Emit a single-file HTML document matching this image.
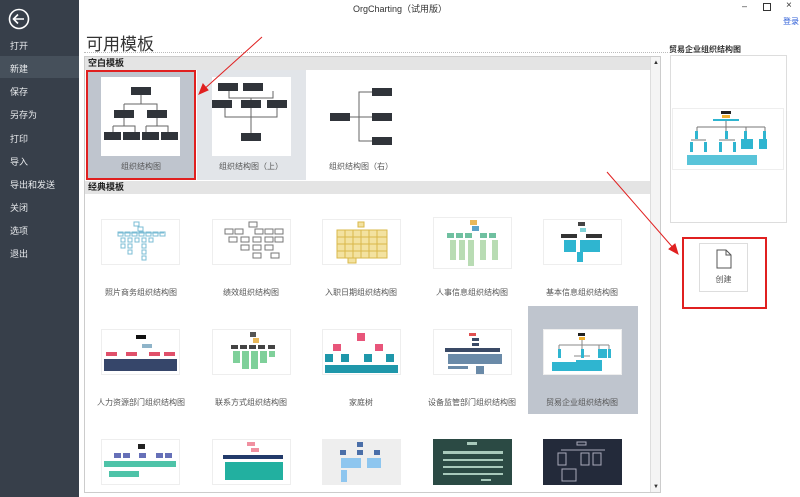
<!DOCTYPE html>
<html><head><meta charset="utf-8"><style>
*{margin:0;padding:0;box-sizing:border-box}
body{width:800px;height:497px;background:#fff;position:relative;overflow:hidden;font-family:"Liberation Sans","Noto Sans CJK SC",sans-serif;color:#333}
.a{position:absolute}
.side{left:0;top:0;width:79px;height:497px;background:#373f4a}
.mi{position:absolute;left:10px;font-size:9px;color:#e8eaed}
.sel{left:0;top:56px;width:79px;height:22px;background:#46505b}
.hd{background:#e4e4e4;font-size:9px;font-weight:bold;color:#222;padding-left:3px;line-height:13px}
.lbl{font-size:8px;color:#555;text-align:center;width:110px}
.th{background:#fff;border:1px solid #eee}
</style></head><body>
<div class="a side"></div>
<div class="a sel"></div>
<svg class="a" style="left:8px;top:8px" width="22" height="22" viewBox="0 0 22 22"><circle cx="11" cy="11" r="9.5" fill="none" stroke="#fff" stroke-width="1.6"/><path d="M16 11H6M10 6.5L5.5 11 10 15.5" fill="none" stroke="#fff" stroke-width="1.6"/></svg>
<div class="mi" style="top:39px">打开</div>
<div class="mi" style="top:62px">新建</div>
<div class="mi" style="top:85px">保存</div>
<div class="mi" style="top:108px">另存为</div>
<div class="mi" style="top:132px">打印</div>
<div class="mi" style="top:155px">导入</div>
<div class="mi" style="top:178px">导出和发送</div>
<div class="mi" style="top:201px">关闭</div>
<div class="mi" style="top:224px">选项</div>
<div class="mi" style="top:247px">退出</div>

<div class="a" style="left:0;top:0;width:800px;text-align:center;font-size:9px;top:2px;color:#333">OrgCharting（试用版）</div>
<div class="a" style="left:742px;top:1px;font-size:9px;color:#333">‒</div>
<div class="a" style="left:763px;top:3px;width:8px;height:8px;border:1px solid #333"></div>
<div class="a" style="left:786px;top:0px;font-size:10px;color:#333">×</div>
<div class="a" style="left:783px;top:16px;font-size:8px;color:#2a5bd7">登录</div>

<div class="a" style="left:86px;top:30px;font-size:17px;color:#333">可用模板</div>
<div class="a" style="left:84px;top:52px;width:584px;border-top:1px dotted #bbb"></div>
<div class="a" style="left:84px;top:56px;width:577px;height:437px;border:1px solid #ccc"></div>
<div class="a" style="left:650px;top:57px;width:10px;height:435px;background:#f4f4f4;border-left:1px solid #ddd"></div>
<div class="a" style="left:653px;top:60px;font-size:6px">▲</div>
<div class="a" style="left:653px;top:484px;font-size:6px">▼</div>
<div class="a hd" style="left:85px;top:57px;width:565px">空白模板</div>
<div class="a hd" style="left:85px;top:181px;width:565px">经典模板</div>

<div class="a" style="left:86px;top:70px;width:110px;height:110px;background:#bfc5ce;border:2px solid #e02020"></div>
<div class="a" style="left:197px;top:70px;width:109px;height:110px;background:#e2e5e9"></div>
<div class="a" style="left:101px;top:77px;width:79px;height:79px;background:#fff"></div>
<div class="a" style="left:212px;top:77px;width:79px;height:79px;background:#fff"></div>
<svg class="a" style="left:101px;top:77px" width="79" height="79" viewBox="0 0 79 79"><g fill="none" stroke="#666" stroke-width="1"><path d="M40 18V27M23 27H56V33M23 27V33M23 41V49M12 49H34V55M12 49V55M56 41V49M45 49H67V55M45 49V55"/></g><g fill="#30343a"><rect x="30" y="10" width="20" height="8"/><rect x="13" y="33" width="20" height="8"/><rect x="46" y="33" width="20" height="8"/><rect x="3" y="55" width="17" height="8"/><rect x="22" y="55" width="17" height="8"/><rect x="41" y="55" width="17" height="8"/><rect x="60" y="55" width="17" height="8"/></g></svg>
<svg class="a" style="left:212px;top:77px" width="79" height="79" viewBox="0 0 79 79"><g fill="none" stroke="#666"><path d="M17 14V21H61V14M39 21V56M13 31V40H65V31"/></g><g fill="#30343a"><rect x="6" y="6" width="20" height="8"/><rect x="31" y="6" width="20" height="8"/><rect x="0" y="23" width="20" height="8"/><rect x="29" y="23" width="20" height="8"/><rect x="55" y="23" width="20" height="8"/><rect x="29" y="56" width="20" height="8"/></g></svg>
<svg class="a" style="left:320px;top:77px" width="79" height="79" viewBox="0 0 79 79"><g fill="none" stroke="#666"><path d="M30 40H52M39 40V15H52M39 40V64H52"/></g><g fill="#30343a"><rect x="10" y="36" width="20" height="8"/><rect x="52" y="11" width="20" height="8"/><rect x="52" y="36" width="20" height="8"/><rect x="52" y="60" width="20" height="8"/></g></svg>
<div class="a lbl" style="left:86px;top:161px">组织结构图</div>
<div class="a lbl" style="left:196px;top:161px">组织结构图（上）</div>
<div class="a lbl" style="left:306px;top:161px">组织结构图（右）</div>

<div class="a" style="left:528px;top:306px;width:110px;height:108px;background:#bfc5ce"></div>

<div class="a th" style="left:101px;top:219px;width:79px;height:46px"><svg width="77" height="44"><g fill="none" stroke="#7bbcd4"><rect x="32" y="2" width="5" height="4"/><rect x="36" y="7" width="5" height="4"/><path d="M16 13H62"/><g><rect x="16" y="12" width="5" height="4"/><rect x="23" y="12" width="5" height="4"/><rect x="30" y="12" width="5" height="4"/><rect x="37" y="12" width="5" height="4"/><rect x="44" y="12" width="5" height="4"/><rect x="51" y="12" width="5" height="4"/><rect x="58" y="12" width="5" height="4"/><rect x="19" y="18" width="4" height="4"/><rect x="26" y="18" width="4" height="4"/><rect x="33" y="18" width="4" height="4"/><rect x="40" y="18" width="4" height="4"/><rect x="47" y="18" width="4" height="4"/><rect x="19" y="24" width="4" height="4"/><rect x="26" y="24" width="4" height="4"/><rect x="40" y="24" width="4" height="4"/><rect x="26" y="30" width="4" height="4"/><rect x="40" y="30" width="4" height="4"/><rect x="40" y="36" width="4" height="4"/></g></g></svg></div>
<div class="a th" style="left:212px;top:219px;width:79px;height:46px"><svg width="77" height="44"><g fill="#fff" stroke="#777"><rect x="36" y="2" width="8" height="5"/><rect x="12" y="9" width="8" height="5"/><rect x="22" y="9" width="8" height="5"/><rect x="42" y="9" width="8" height="5"/><rect x="52" y="9" width="8" height="5"/><rect x="62" y="9" width="8" height="5"/><rect x="16" y="17" width="8" height="5"/><rect x="28" y="17" width="8" height="5"/><rect x="40" y="17" width="8" height="5"/><rect x="52" y="17" width="8" height="5"/><rect x="62" y="17" width="8" height="5"/><rect x="28" y="25" width="8" height="5"/><rect x="40" y="25" width="8" height="5"/><rect x="52" y="25" width="8" height="5"/><rect x="40" y="33" width="8" height="5"/><rect x="58" y="33" width="8" height="5"/></g></svg></div>
<div class="a th" style="left:322px;top:219px;width:79px;height:46px"><svg width="77" height="44"><g fill="#f3e2a0" stroke="#d9b84a"><rect x="35" y="2" width="6" height="5"/><rect x="14" y="10" width="50" height="28"/><rect x="25" y="38" width="8" height="5"/></g><g stroke="#d9b84a"><path d="M14 17H64M14 24H64M14 31H64M22 10V38M30 10V38M38 10V38M46 10V38M54 10V38"/></g></svg></div>
<div class="a th" style="left:433px;top:217px;width:79px;height:52px"><svg width="77" height="50"><rect x="36" y="2" width="7" height="5" fill="#e9b85a"/><rect x="38" y="8" width="7" height="5" fill="#5ba3c9"/><g fill="#6fc0a0"><rect x="13" y="15" width="7" height="5"/><rect x="22" y="15" width="7" height="5"/><rect x="31" y="15" width="7" height="5"/><rect x="46" y="15" width="7" height="5"/><rect x="55" y="15" width="7" height="5"/></g><g fill="#b9dcb4"><rect x="16" y="22" width="6" height="20"/><rect x="25" y="22" width="6" height="20"/><rect x="34" y="22" width="6" height="26"/><rect x="46" y="22" width="6" height="20"/><rect x="58" y="22" width="6" height="20"/></g></svg></div>
<div class="a th" style="left:543px;top:219px;width:79px;height:46px"><svg width="77" height="44"><rect x="34" y="2" width="7" height="4" fill="#444"/><rect x="36" y="8" width="6" height="4" fill="#7fd3d8"/><g fill="#333"><rect x="17" y="14" width="16" height="4"/><rect x="42" y="14" width="16" height="4"/></g><g fill="#2fb5d0"><rect x="20" y="20" width="12" height="12"/><rect x="36" y="20" width="20" height="12"/><rect x="33" y="32" width="6" height="10"/></g></svg></div>

<div class="a th" style="left:101px;top:329px;width:79px;height:46px"><svg width="77" height="44"><rect x="34" y="5" width="10" height="4" fill="#111"/><rect x="40" y="14" width="10" height="4" fill="#8fb4c9"/><g fill="#e0506a"><rect x="4" y="22" width="11" height="4"/><rect x="24" y="22" width="11" height="4"/><rect x="47" y="22" width="11" height="4"/><rect x="62" y="22" width="11" height="4"/></g><g fill="#36466a"><rect x="2" y="29" width="73" height="12"/></g></svg></div>
<div class="a th" style="left:212px;top:329px;width:79px;height:46px"><svg width="77" height="44"><rect x="37" y="2" width="6" height="5" fill="#555"/><rect x="40" y="8" width="6" height="5" fill="#e9b85a"/><g fill="#444"><rect x="18" y="15" width="7" height="4"/><rect x="27" y="15" width="7" height="4"/><rect x="36" y="15" width="7" height="4"/><rect x="45" y="15" width="7" height="4"/><rect x="55" y="15" width="7" height="4"/></g><g fill="#7fd09a"><rect x="20" y="21" width="7" height="12"/><rect x="29" y="21" width="7" height="18"/><rect x="38" y="21" width="7" height="18"/><rect x="47" y="21" width="7" height="12"/><rect x="56" y="21" width="6" height="6"/></g></svg></div>
<div class="a th" style="left:322px;top:329px;width:79px;height:46px"><svg width="77" height="44"><rect x="34" y="3" width="8" height="8" fill="#e8557a"/><rect x="10" y="14" width="8" height="7" fill="#e8557a"/><rect x="52" y="14" width="8" height="7" fill="#e8557a"/><g fill="#1f97aa"><rect x="2" y="24" width="8" height="8"/><rect x="18" y="24" width="8" height="8"/><rect x="41" y="24" width="8" height="8"/><rect x="63" y="24" width="8" height="8"/><rect x="2" y="35" width="73" height="8"/></g></svg></div>
<div class="a th" style="left:433px;top:329px;width:79px;height:46px"><svg width="77" height="44"><rect x="35" y="3" width="7" height="3" fill="#e05050"/><g fill="#3a4a66"><rect x="38" y="8" width="7" height="3"/><rect x="38" y="13" width="7" height="3"/><rect x="11" y="18" width="55" height="4"/></g><g fill="#6a8aa8"><rect x="14" y="24" width="54" height="10"/><rect x="14" y="36" width="20" height="3"/><rect x="42" y="36" width="8" height="8"/></g></svg></div>
<div class="a th" style="left:543px;top:329px;width:79px;height:46px"><svg width="77" height="44"><rect x="34" y="3" width="7" height="3" fill="#222"/><rect x="35" y="7" width="6" height="3" fill="#f0b030"/><g fill="none" stroke="#888"><path d="M15 15H65M38 10V15M15 15V19M38 15V19M55 15V19M65 15V19M30 26H46"/></g><g fill="#2fb5d0"><rect x="14" y="19" width="3" height="9"/><rect x="37" y="19" width="3" height="9"/><rect x="54" y="19" width="9" height="9"/><rect x="64" y="19" width="3" height="9"/><rect x="8" y="32" width="24" height="9"/><rect x="32" y="30" width="26" height="11"/></g></svg></div>

<div class="a th" style="left:101px;top:439px;width:79px;height:46px"><svg width="77" height="44"><rect x="36" y="4" width="7" height="5" fill="#222"/><g fill="#6670b8"><rect x="12" y="13" width="7" height="5"/><rect x="21" y="13" width="7" height="5"/><rect x="37" y="13" width="7" height="5"/><rect x="54" y="13" width="7" height="5"/><rect x="63" y="13" width="7" height="5"/></g><g fill="#4ec3a8"><rect x="2" y="21" width="72" height="6"/><rect x="7" y="31" width="30" height="6"/></g></svg></div>
<div class="a th" style="left:212px;top:439px;width:79px;height:46px"><svg width="77" height="44"><rect x="34" y="2" width="8" height="4" fill="#f090a0"/><rect x="38" y="8" width="8" height="4" fill="#f090a0"/><rect x="10" y="15" width="60" height="4" fill="#223a6a"/><g fill="#22b0a0"><rect x="12" y="22" width="58" height="18"/></g></svg></div>
<div class="a th" style="left:322px;top:439px;width:79px;height:46px;background:#eee"><svg width="77" height="44"><rect x="34" y="2" width="6" height="5" fill="#4a6ea8"/><g fill="#4a6ea8"><rect x="17" y="10" width="6" height="5"/><rect x="34" y="10" width="6" height="5"/><rect x="51" y="10" width="6" height="5"/></g><g fill="#8ec6ef"><rect x="18" y="18" width="20" height="10"/><rect x="44" y="18" width="14" height="10"/><rect x="18" y="30" width="6" height="12"/></g></svg></div>
<div class="a" style="left:433px;top:439px;width:79px;height:46px;background:#2b4a44"><svg width="79" height="46"><g fill="#dfe" opacity=".7"><rect x="34" y="3" width="10" height="3"/><rect x="10" y="12" width="60" height="3"/><rect x="10" y="20" width="60" height="2"/><rect x="10" y="27" width="60" height="2"/><rect x="10" y="34" width="60" height="2"/><rect x="48" y="40" width="10" height="2"/></g></svg></div>
<div class="a" style="left:543px;top:439px;width:79px;height:46px;background:#232a3a"><svg width="79" height="46"><g fill="none" stroke="#aab" ><rect x="34" y="3" width="9" height="3"/><path d="M18 11H62"/><rect x="15" y="14" width="8" height="12"/><rect x="38" y="14" width="8" height="12"/><rect x="50" y="14" width="8" height="12"/><rect x="19" y="30" width="14" height="12"/></g></svg></div>

<div class="a lbl" style="left:86px;top:287px">照片商务组织结构图</div>
<div class="a lbl" style="left:196px;top:287px">绩效组织结构图</div>
<div class="a lbl" style="left:306px;top:287px">入职日期组织结构图</div>
<div class="a lbl" style="left:417px;top:287px">人事信息组织结构图</div>
<div class="a lbl" style="left:527px;top:287px">基本信息组织结构图</div>
<div class="a lbl" style="left:86px;top:397px">人力资源部门组织结构图</div>
<div class="a lbl" style="left:196px;top:397px">联系方式组织结构图</div>
<div class="a lbl" style="left:306px;top:397px">家庭树</div>
<div class="a lbl" style="left:417px;top:397px">设备监管部门组织结构图</div>
<div class="a lbl" style="left:527px;top:397px">贸易企业组织结构图</div>

<div class="a" style="left:669px;top:44px;font-size:8px;font-weight:bold;color:#333">贸易企业组织结构图</div>
<div class="a" style="left:670px;top:55px;width:117px;height:168px;border:1px solid #ddd"></div>
<div class="a" style="left:672px;top:108px;width:112px;height:62px;border:1px solid #eee"><svg width="110" height="60"><rect x="48" y="2" width="10" height="3" fill="#222"/><rect x="49" y="6" width="8" height="3" fill="#f0b030"/><rect x="40" y="10" width="26" height="2" fill="#2fb5d0"/><g fill="none" stroke="#777"><path d="M24 18H92M53 12V18M24 18V22M53 18V22M73 18V22M92 18V22M18 31H33M46 31H62"/></g><g fill="#2fb5d0"><rect x="22" y="22" width="3" height="8"/><rect x="52" y="22" width="3" height="8"/><rect x="71" y="22" width="3" height="8"/><rect x="90" y="22" width="3" height="8"/><rect x="17" y="33" width="3" height="10"/><rect x="31" y="33" width="3" height="10"/><rect x="46" y="33" width="3" height="10"/><rect x="60" y="33" width="3" height="10"/><rect x="68" y="30" width="12" height="10"/><rect x="86" y="30" width="8" height="10"/><rect x="14" y="46" width="70" height="10" opacity=".8"/></g></svg></div>
<div class="a" style="left:682px;top:237px;width:85px;height:72px;border:2px solid #e02020"></div>
<div class="a" style="left:699px;top:243px;width:49px;height:49px;border:1px solid #ddd"></div>
<svg class="a" style="left:716px;top:249px" width="16" height="20"><path d="M1 1H10L15 6V19H1Z" fill="#fff" stroke="#555"/><path d="M10 1V6H15" fill="none" stroke="#555"/></svg>
<div class="a" style="left:699px;top:274px;width:49px;text-align:center;font-size:8px;color:#555">创建</div>

<svg class="a" style="left:0;top:0" width="800" height="497"><g stroke="#e02020" stroke-width="1" fill="#e02020"><line x1="262" y1="37" x2="202" y2="91"/><path d="M199 94L203 84 208 90Z"/><line x1="607" y1="172" x2="675" y2="250"/><path d="M678 254L669 249 675 244Z"/></g></svg>
</body></html>
